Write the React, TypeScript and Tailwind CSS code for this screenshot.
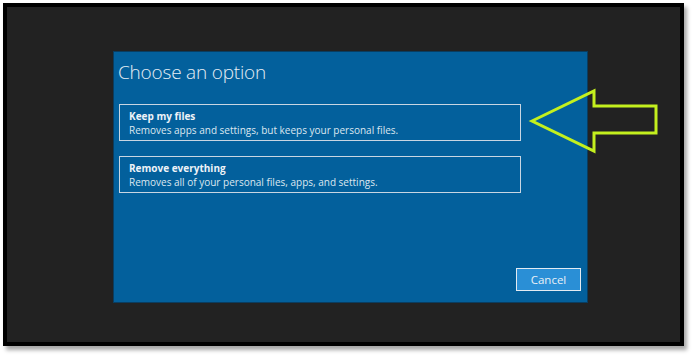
import React from 'react';

const options = [
	{ title: 'Keep my files', desc: 'Removes apps and settings, but keeps your personal files.' },
	{ title: 'Remove everything', desc: 'Removes all of your personal files, apps, and settings.' },
];

export default function App() {
	return (
		<div className="w-[692px] h-[356px] bg-white relative" style={{ fontFamily: '"Open Sans", "Noto Sans", sans-serif' }}>
			{/* Screen frame */}
			<div className="absolute left-[3px] top-[3px] w-[681px] h-[343px] border-4 border-black bg-[#222222] shadow-[3px_4px_4px_rgba(0,0,0,0.35)] pl-[106px] pt-[44px]">
				{/* Blue dialog */}
				<div className="w-[475px] h-[252px] bg-[#03609c] border border-[#0a3d60] flex flex-col px-[4px] pt-[7px] pb-[11px]">
					<h1 className="text-[19px] font-light text-[#e6eef5] leading-[26px] tracking-[-0.2px]">Choose an option</h1>

					<div className="flex flex-col gap-[15px] mt-[19px] pl-[1px]">
						{options.map(opt => (
							<div key={opt.title} className="w-[402px] h-[37px] border-[1.5px] border-[#c9d6e2] px-[9px] pt-[4px] text-[#eef3f8]">
								<div className="text-[10px] font-bold leading-[14px]">{opt.title}</div>
								<div className="text-[10px] leading-[14px] text-[#dde7f0]">{opt.desc}</div>
							</div>
						))}
					</div>

					<div className="mt-auto flex justify-end pr-[2px]">
						<button className="w-[65px] h-[23px] bg-[#2a8fd6] border-[1.5px] border-[#e3ebf2] text-[11.5px] text-[#e8f0f7] leading-none">
							Cancel
						</button>
					</div>
				</div>
			</div>

			{/* Annotation arrow */}
			<svg className="absolute left-0 top-0" width="692" height="356" viewBox="0 0 692 356">
				<polygon
					points="532,121 594,91 594,106 656,106 656,133 594,133 594,151"
					fill="none"
					stroke="#c4f01e"
					strokeWidth="3"
					strokeLinejoin="miter"
				/>
			</svg>
		</div>
	);
}
